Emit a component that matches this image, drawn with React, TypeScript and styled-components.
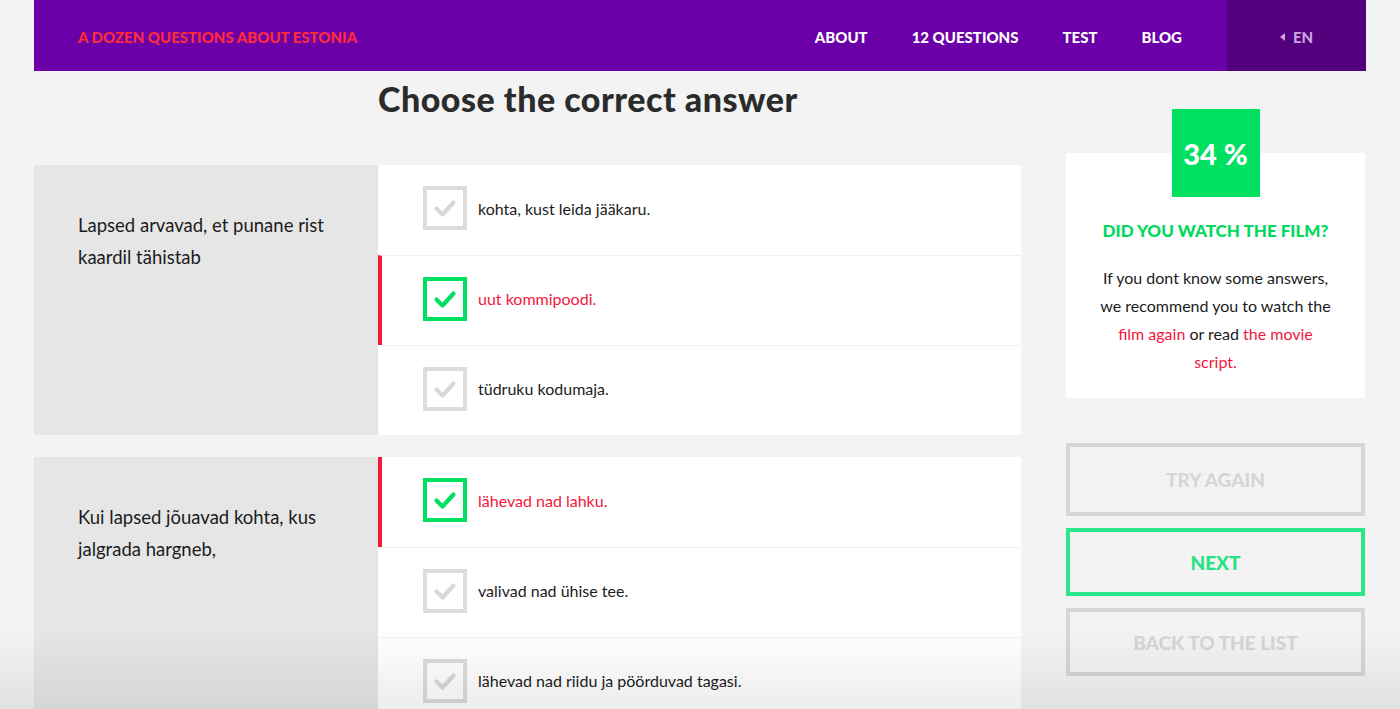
import React from "react";
import styled, { createGlobalStyle } from "styled-components";

const GlobalStyle = createGlobalStyle`
  html, body {
    margin: 0;
    padding: 0;
    background: #f3f3f3;
    font-family: Lato, "Open Sans", sans-serif;
    color: #1c1c1c;
  }
  * { box-sizing: border-box; }
`;

type Answer = { text: string; picked?: boolean };
type Question = { text: string; answers: Answer[] };

const questions: Question[] = [
  {
    text: "Lapsed arvavad, et punane rist\nkaardil tähistab",
    answers: [
      { text: "kohta, kust leida jääkaru." },
      { text: "uut kommipoodi.", picked: true },
      { text: "tüdruku kodumaja." },
    ],
  },
  {
    text: "Kui lapsed jõuavad kohta, kus\njalgrada hargneb,",
    answers: [
      { text: "lähevad nad lahku.", picked: true },
      { text: "valivad nad ühise tee." },
      { text: "lähevad nad riidu ja pöörduvad tagasi." },
    ],
  },
];

const CheckIcon = ({ color }: { color: string }) => (
  <svg width="36" height="36" viewBox="0 0 36 36">
    <polyline
      points="9.5,18.5 15.5,24.5 26.5,12.5"
      fill="none"
      stroke={color}
      strokeWidth="4.2"
      strokeLinecap="round"
      strokeLinejoin="round"
    />
  </svg>
);

const App = () => {
  return (
    <>
      <GlobalStyle />
      <Page>
        <Header>
          <Brand>A DOZEN QUESTIONS ABOUT ESTONIA</Brand>
          <Nav>
            <NavLink>ABOUT</NavLink>
            <NavLink>12 QUESTIONS</NavLink>
            <NavLink>TEST</NavLink>
            <NavLink>BLOG</NavLink>
          </Nav>
          <Lang>
            <Arrow />
            EN
          </Lang>
        </Header>

        <Main>
          <LeftColumn>
            <Title>Choose the correct answer</Title>
            {questions.map((q, qi) => (
              <QuestionBlock key={qi}>
                <QuestionText>{q.text}</QuestionText>
                <AnswerList>
                  {q.answers.map((a, ai) => (
                    <AnswerRow key={ai} $picked={!!a.picked}>
                      <Box $picked={!!a.picked}>
                        <CheckIcon color={a.picked ? "#00e060" : "#d8d8d8"} />
                      </Box>
                      <AnswerText $picked={!!a.picked}>{a.text}</AnswerText>
                    </AnswerRow>
                  ))}
                </AnswerList>
              </QuestionBlock>
            ))}
          </LeftColumn>

          <RightColumn>
            <ScoreCard>
              <Badge>34 %</Badge>
              <CardTitle>DID YOU WATCH THE FILM?</CardTitle>
              <CardText>
                If you dont know some answers,
                <br />
                we recommend you to watch the
                <br />
                <RedLink>film again</RedLink> or read <RedLink>the movie</RedLink>
                <br />
                <RedLink>script.</RedLink>
              </CardText>
            </ScoreCard>
            <Buttons>
              <ActionButton $tall>TRY AGAIN</ActionButton>
              <ActionButton $active>NEXT</ActionButton>
              <ActionButton>BACK TO THE LIST</ActionButton>
            </Buttons>
          </RightColumn>
        </Main>
      </Page>
      <Vignette />
    </>
  );
};

export default App;

// layout

const Page = styled.div`
  width: 1332px;
  margin: 0 auto;
`;

const Header = styled.header`
  height: 71px;
  background: #6b00a9;
  display: flex;
  align-items: center;
  padding-left: 44px;
`;

const Brand = styled.div`
  color: #ff2b3a;
  font-weight: 900;
  font-size: 15px;
  padding-top: 3px;
  flex: 1;
`;

const Nav = styled.nav`
  display: flex;
  gap: 44px;
  margin-right: 45px;
  padding-top: 3px;
`;

const NavLink = styled.a`
  color: #ffffff;
  font-weight: 900;
  font-size: 15px;
  cursor: pointer;
`;

const Lang = styled.div`
  width: 139px;
  height: 100%;
  background: #53007f;
  display: flex;
  align-items: center;
  justify-content: center;
  gap: 8px;
  padding-top: 3px;
  color: #c9a4df;
  font-weight: 900;
  font-size: 15px;
`;

const Arrow = styled.span`
  width: 0;
  height: 0;
  border-top: 4px solid transparent;
  border-bottom: 4px solid transparent;
  border-right: 5px solid #c9a4df;
`;

const Main = styled.main`
  display: grid;
  grid-template-columns: 987px 299px;
  column-gap: 45px;
`;

const LeftColumn = styled.div`
  display: flex;
  flex-direction: column;
`;

const Title = styled.h1`
  margin: 0 0 0 344px;
  height: 94px;
  padding-top: 7px;
  font-size: 34px;
  font-weight: 900;
  color: #2b2b2b;
  letter-spacing: 0.5px;
`;

const QuestionBlock = styled.section`
  display: grid;
  grid-template-columns: 344px 643px;
  margin-bottom: 22px;
`;

const QuestionText = styled.div`
  background: #e6e6e6;
  padding: 44px 20px 0 44px;
  font-size: 18.5px;
  line-height: 32px;
  white-space: pre-line;
  color: #1c1c1c;
`;

const AnswerList = styled.div`
  background: #ffffff;
  display: flex;
  flex-direction: column;
`;

const AnswerRow = styled.div<{ $picked: boolean }>`
  height: 90px;
  display: flex;
  align-items: center;
  padding-left: 41px;
  padding-bottom: 4px;
  border-left: 4px solid ${(p) => (p.$picked ? "#f2173c" : "transparent")};
  & + & {
    border-top: 1px solid #efefef;
  }
`;

const Box = styled.div<{ $picked: boolean }>`
  width: 44px;
  height: 44px;
  border: 4px solid ${(p) => (p.$picked ? "#00e060" : "#dcdcdc")};
  display: flex;
  align-items: center;
  justify-content: center;
  flex-shrink: 0;
`;

const AnswerText = styled.span<{ $picked: boolean }>`
  margin-left: 11px;
  font-size: 16px;
  color: ${(p) => (p.$picked ? "#f2173c" : "#1c1c1c")};
`;

// right column

const RightColumn = styled.aside`
  padding-top: 82px;
  display: flex;
  flex-direction: column;
`;

const ScoreCard = styled.div`
  background: #ffffff;
  display: flex;
  flex-direction: column;
  align-items: center;
  padding-bottom: 22px;
`;

const Badge = styled.div`
  width: 88px;
  height: 88px;
  margin-top: -44px;
  background: #00e060;
  color: #ffffff;
  font-weight: 900;
  font-size: 29px;
  display: flex;
  align-items: center;
  justify-content: center;
`;

const CardTitle = styled.div`
  margin-top: 23px;
  color: #00d95c;
  font-weight: 900;
  font-size: 17px;
`;

const CardText = styled.p`
  margin: 23px 0 0;
  text-align: center;
  font-size: 16px;
  line-height: 28px;
  color: #1c1c1c;
`;

const RedLink = styled.span`
  color: #f2173c;
`;

const Buttons = styled.div`
  margin-top: 45px;
  display: flex;
  flex-direction: column;
  gap: 12px;
`;

const ActionButton = styled.button<{ $active?: boolean; $tall?: boolean }>`
  height: ${(p) => (p.$tall ? "73px" : "68px")};
  background: transparent;
  border: 4px solid ${(p) => (p.$active ? "#2de88a" : "#d6d6d6")};
  color: ${(p) => (p.$active ? "#26e282" : "#d6d6d6")};
  font-family: Lato, sans-serif;
  font-weight: 900;
  font-size: 19px;
  cursor: pointer;
`;

const Vignette = styled.div`
  position: fixed;
  left: 0;
  right: 0;
  bottom: 0;
  height: 80px;
  pointer-events: none;
  background: linear-gradient(to bottom, rgba(0, 0, 0, 0), rgba(0, 0, 0, 0.07));
`;
